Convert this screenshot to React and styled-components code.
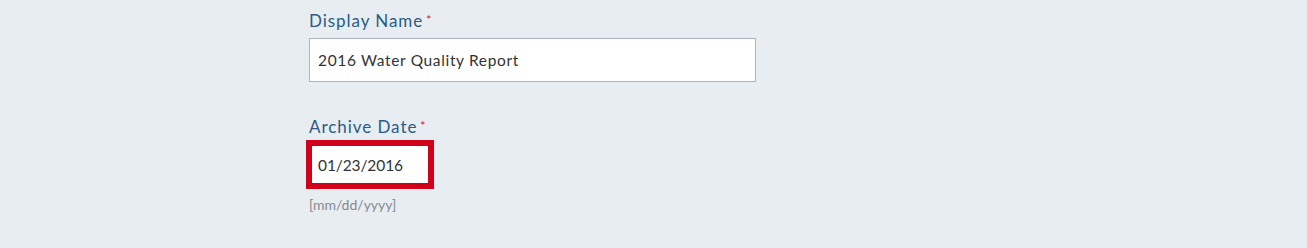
import React from "react";
import styled, { createGlobalStyle } from "styled-components";

const Global = createGlobalStyle`
  html, body { margin: 0; padding: 0; background: #e8edf1; }
  body { font-family: Lato, "Open Sans", sans-serif; }
`;

const Page = styled.div`
  width: 1307px;
  height: 248px;
  background: #e8edf1;
  box-sizing: border-box;
  padding: 11px 0 0 309px;
  display: flex;
  flex-direction: column;
`;

const Field = styled.div`
  display: flex;
  flex-direction: column;
  align-items: flex-start;
  margin-top: ${(p) => p.$gap || 0}px;
`;

const Label = styled.label`
  font-size: 17px;
  line-height: 20px;
  color: #2b5b85;
  letter-spacing: 0.95px;
  margin-bottom: ${(p) => p.$below}px;
`;

const Req = styled.span`
  color: #c8102e;
  font-size: 12px;
  vertical-align: top;
  margin-left: 3px;
  letter-spacing: 0;
  position: relative;
  top: -1px;
`;

const TextInput = styled.div`
  box-sizing: border-box;
  width: 447px;
  height: 44px;
  background: #fff;
  border: 1px solid #a9b5c1;
  padding: 0 8px;
  display: flex;
  align-items: center;
  font-size: 15.5px;
  color: #333;
  letter-spacing: 0.65px;
`;

const DateBox = styled.div`
  box-sizing: border-box;
  width: 128px;
  height: 49px;
  margin-left: -3px;
  background: #fff;
  border: 6px solid #d0021b;
  padding: 0 6px;
  display: flex;
  align-items: center;
  font-size: 15.5px;
  color: #333;
  letter-spacing: -0.1px;
`;

const Hint = styled.div`
  margin-top: 7px;
  font-size: 14px;
  line-height: 18px;
  color: #858b92;
`;

export default function App() {
  return (
    <>
      <Global />
      <Page>
        <Field>
          <Label $below={7}>
            Display Name<Req>*</Req>
          </Label>
          <TextInput>2016 Water Quality Report</TextInput>
        </Field>
        <Field $gap={35}>
          <Label $below={3}>
            Archive Date<Req>*</Req>
          </Label>
          <DateBox>01/23/2016</DateBox>
          <Hint>[mm/dd/yyyy]</Hint>
        </Field>
      </Page>
    </>
  );
}
